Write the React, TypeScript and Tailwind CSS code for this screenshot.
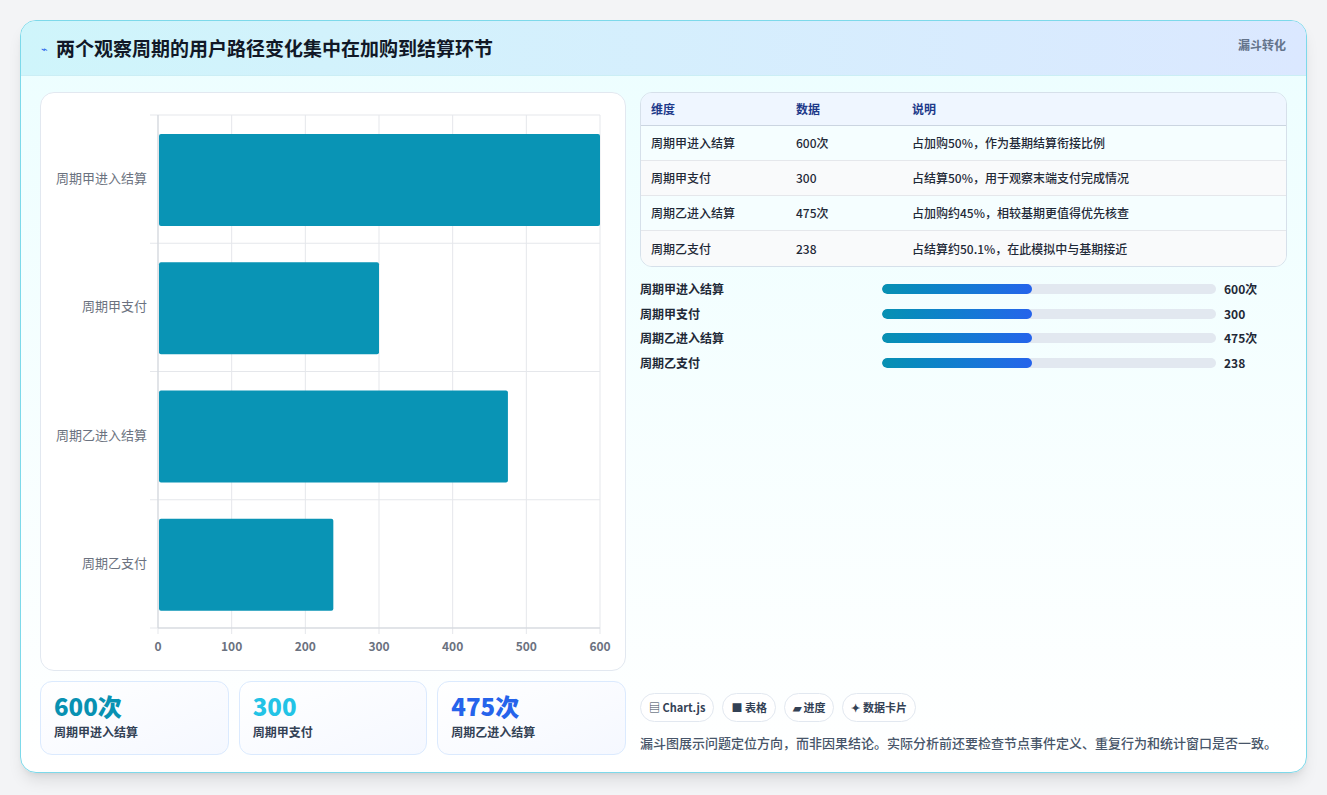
import React from "react";

const rows = [
  { k: "周期甲进入结算", v: "600次", n: 600, d: "占加购50%，作为基期结算衔接比例" },
  { k: "周期甲支付", v: "300", n: 300, d: "占结算50%，用于观察末端支付完成情况" },
  { k: "周期乙进入结算", v: "475次", n: 475, d: "占加购约45%，相较基期更值得优先核查" },
  { k: "周期乙支付", v: "238", n: 238, d: "占结算约50.1%，在此模拟中与基期接近" },
];

function Chart() {
  const x0 = 117, x1 = 559, top = 22, bot = 535;
  const sx = (v: number) => x0 + ((x1 - x0) * v) / 600;
  const band = (bot - top) / 4;
  return (
    <svg width="585" height="578" className="block">
      {[0, 100, 200, 300, 400, 500, 600].map((t) => (
        <g key={t}>
          <line x1={sx(t)} x2={sx(t)} y1={top} y2={bot + 6} stroke="#e5e7eb" />
          <text x={sx(t)} y={558} textAnchor="middle" fontSize="12" fontWeight="600" fill="#6b7280">{t}</text>
        </g>
      ))}
      {[0, 1, 2, 3, 4].map((i) => (
        <line key={i} x1={x0 - 8} x2={x1} y1={top + band * i} y2={top + band * i} stroke="#e5e7eb" />
      ))}
      <line x1={x0} x2={x0} y1={top} y2={bot} stroke="#d1d5db" />
      <line x1={x0} x2={x1} y1={bot} y2={bot} stroke="#d1d5db" />
      {rows.map((r, i) => (
        <g key={r.k}>
          <rect x={x0 + 1} y={top + band * i + 19} width={sx(r.n) - x0 - 1} height={92} rx="2" fill="#0994b5" />
          <text x={x0 - 11} y={top + band * i + band / 2 + 4} textAnchor="end" fontSize="13" fill="#6b7280">{r.k}</text>
        </g>
      ))}
    </svg>
  );
}

export default function App() {
  return (
    <div className="w-[1327px] h-[795px] bg-[#f3f4f6] p-[20px] pb-[22px]" style={{ fontFamily: '"Noto Sans CJK SC", "Noto Sans", sans-serif' }}>
      <div className="h-full rounded-[16px] border border-[#7dd9ea] bg-gradient-to-b from-[#ecfeff] to-white overflow-hidden flex flex-col shadow-lg">
        <div className="h-[55px] shrink-0 bg-gradient-to-r from-[#cff5fb] to-[#dbe8ff] border-b border-[#cbeef5] flex items-center justify-between px-[20px]">
          <div className="flex items-center gap-[8px]">
            <span className="text-[#2563eb] text-[11px]">⌁</span>
            <span className="text-[19px] font-bold text-[#111827]">两个观察周期的用户路径变化集中在加购到结算环节</span>
          </div>
          <span className="text-[12px] font-semibold text-[#64748b] self-start mt-[15px]">漏斗转化</span>
        </div>
        <div className="flex-1 flex gap-[14px] px-[19px] pt-[16px] pb-[18px]">
          <div className="w-[586px] flex flex-col gap-[10px]">
            <div className="h-[579px] rounded-[14px] border border-[#e2e8f0] bg-white overflow-hidden">
              <Chart />
            </div>
            <div className="flex gap-[10px]">
              {[
                ["600次", "周期甲进入结算", "text-[#0891b2]"],
                ["300", "周期甲支付", "text-[#22c3e6]"],
                ["475次", "周期乙进入结算", "text-[#2563eb]"],
              ].map(([v, l, c]) => (
                <div key={l} className="flex-1 h-[74px] rounded-[12px] border border-[#dbeafe] bg-gradient-to-br from-white to-[#f5f8ff] px-[13px] pt-[9px]">
                  <div className={`text-[24px] font-extrabold leading-[30px] ${c}`}>{v}</div>
                  <div className="text-[12px] font-semibold text-[#334155] mt-[2px]">{l}</div>
                </div>
              ))}
            </div>
          </div>
          <div className="flex-1 flex flex-col">
            <div className="rounded-[12px] border border-[#d6e0ea] overflow-hidden text-[12px]">
              <div className="h-[33px] flex items-center bg-[#eff6ff] border-b border-[#cbd5e1] font-semibold text-[#1e3a8a]">
                <div className="w-[155px] pl-[10px]">维度</div><div className="w-[116px]">数据</div><div>说明</div>
              </div>
              {rows.map((r, i) => (
                <div key={r.k} className={`h-[35px] flex items-center text-[#1f2937] font-medium ${i % 2 ? "bg-[#f9fafb]" : "bg-[#f5feff]"} ${i < 3 ? "border-b border-[#e5e7eb]" : ""}`}>
                  <div className="w-[155px] pl-[10px]">{r.k}</div><div className="w-[116px]">{r.v}</div><div>{r.d}</div>
                </div>
              ))}
            </div>
            <div className="mt-[10px] flex flex-col">
              {rows.map((r) => (
                <div key={r.k} className="h-[24.6px] flex items-center text-[12px] font-semibold text-[#1f2937]">
                  <div className="w-[242px]">{r.k}</div>
                  <div className="w-[334px] h-[10px] rounded-full bg-[#e2e8f0] overflow-hidden">
                    <div className="h-full w-[45%] rounded-full bg-gradient-to-r from-[#0891b2] to-[#2563eb]" />
                  </div>
                  <div className="ml-[8px]">{r.v}</div>
                </div>
              ))}
            </div>
            <div className="flex-1" />
            <div className="flex gap-[8px]">
              {["▤ Chart.js", "■ 表格", "▰ 进度", "✦ 数据卡片"].map((t) => (
                <div key={t} className="h-[29px] px-[8px] rounded-full border border-[#e2e8f0] bg-white flex items-center text-[11px] font-semibold text-[#334155]">{t}</div>
              ))}
            </div>
            <div className="mt-[11px] mb-[3px] text-[13px] font-medium text-[#475569]">漏斗图展示问题定位方向，而非因果结论。实际分析前还要检查节点事件定义、重复行为和统计窗口是否一致。</div>
          </div>
        </div>
      </div>
    </div>
  );
}
